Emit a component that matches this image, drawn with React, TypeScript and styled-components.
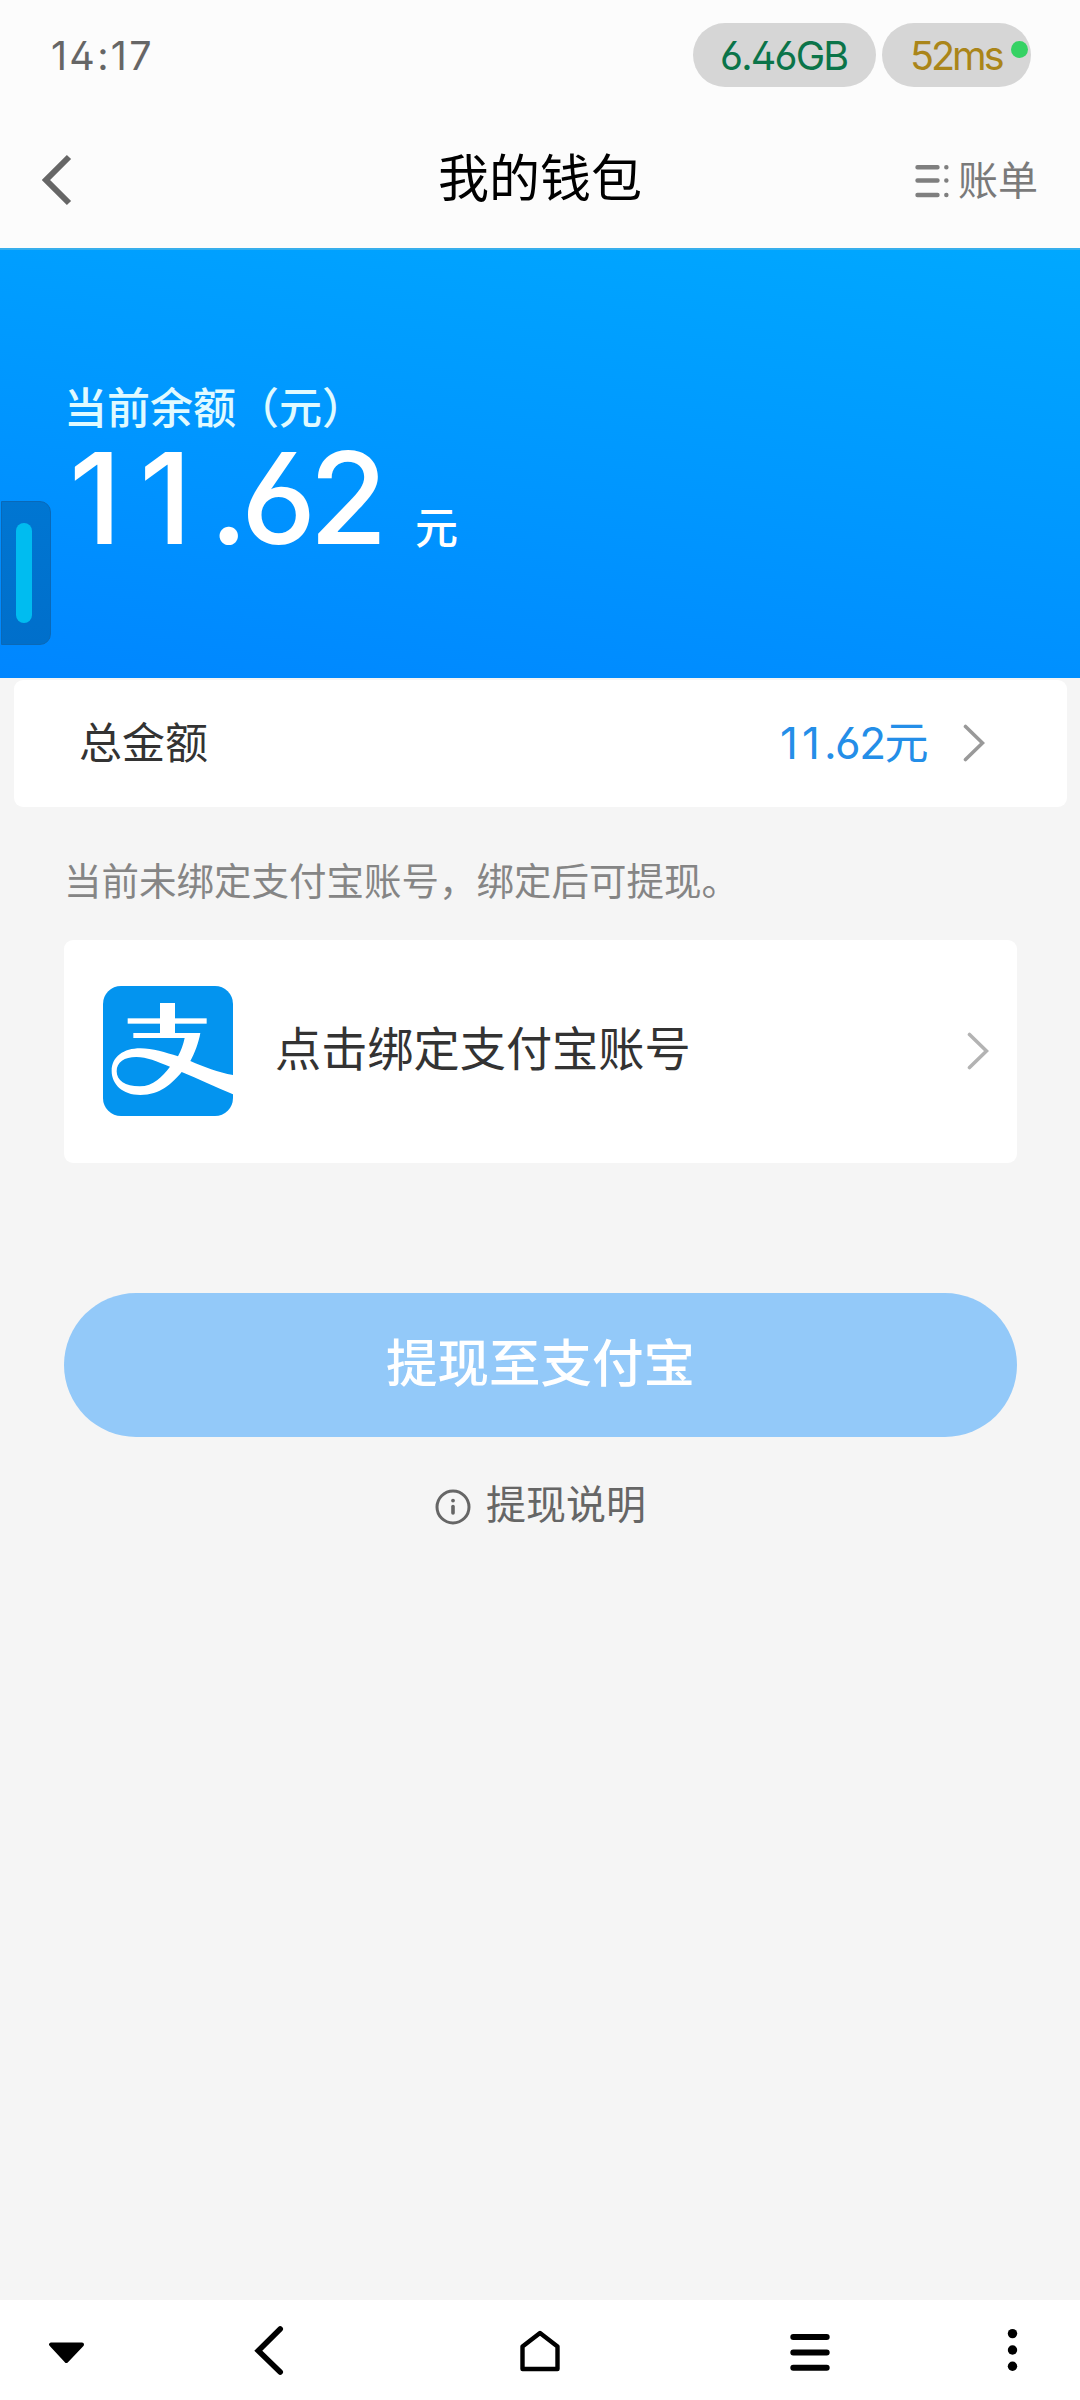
import React from "react";
import styled, { createGlobalStyle } from "styled-components";

const GlobalStyle = createGlobalStyle`
  * { box-sizing: border-box; }
  body {
    margin: 0;
    background: #f5f5f5;
    font-family: Inter, "Noto Sans CJK SC", sans-serif;
    font-feature-settings: "cv02", "cv03";
  }
`;

const Screen = styled.div`
  position: relative;
  display: flex;
  flex-direction: column;
  width: 1080px;
  height: 2400px;
  overflow: hidden;
  background: #f5f5f5;
`;

const StatusBar = styled.div`
  display: flex;
  align-items: center;
  justify-content: space-between;
  height: 110px;
  padding: 0 49px 0 51px;
  background: #fcfcfc;
`;

const Clock = styled.time`
  padding-top: 2px;
  font-size: 39.5px;
  line-height: 48px;
  letter-spacing: 2.3px;
  color: #666;
`;

const Pills = styled.div`
  display: flex;
  gap: 6px;
`;

const Pill = styled.span<{ $width: number; $inset: number; $color: string; $spacing: number }>`
  position: relative;
  width: ${(p) => p.$width}px;
  height: 64px;
  padding-left: ${(p) => p.$inset}px;
  padding-top: 1px;
  border-radius: 32px;
  background: #d6d6d6;
  color: ${(p) => p.$color};
  font-size: 39.5px;
  line-height: 64px;
  letter-spacing: ${(p) => p.$spacing}px;
  white-space: nowrap;
`;

const ActiveDot = styled.i`
  position: absolute;
  top: 18px;
  right: 3px;
  width: 17px;
  height: 17px;
  border-radius: 50%;
  background: #35d264;
`;

const Header = styled.header`
  display: grid;
  grid-template-columns: 1fr auto 1fr;
  align-items: center;
  height: 138px;
  padding: 2px 42px 0;
  background: #fcfcfc;
`;

const Title = styled.h1`
  margin: 0;
  padding-bottom: 3px;
  font-size: 51px;
  line-height: 64px;
  font-weight: 400;
  color: #000;
`;

const Bills = styled.div`
  display: flex;
  align-items: center;
  justify-content: flex-end;
  gap: 9px;
  padding-top: 2px;
  font-size: 40px;
  line-height: 50px;
  color: #7a7a7a;
`;

const Hero = styled.section`
  height: 430px;
  padding: 130px 64px 0;
  border-top: 2px solid #36aeec;
  background: linear-gradient(189deg, #00a8ff 0%, #0099ff 45%, #0086ff 100%);
  color: #fff;
`;

const HeroLabel = styled.div`
  font-size: 43px;
  font-weight: 500;
  line-height: 56px;
  color: #e0faff;
`;

const Amount = styled.div`
  display: flex;
  align-items: baseline;
  margin-top: 10px;
  line-height: 104px;
`;

const AmountValue = styled.span`
  width: 351px;
  padding-left: 5px;
  font-size: 127px;
  font-weight: 500;
  letter-spacing: -7px;
`;

const AmountUnit = styled.span`
  font-size: 43px;
  font-weight: 500;
`;

const WideDigits = styled.span<{ $spacing: number }>`
  letter-spacing: ${(p) => p.$spacing}px;
`;

const TotalCard = styled.section`
  display: flex;
  align-items: center;
  height: 127px;
  margin: 2px 13px 0 14px;
  padding: 0 82px 2px 65px;
  border-radius: 9px;
  background: #fff;
`;

const TotalLabel = styled.span`
  flex: 1;
  font-size: 43px;
  line-height: 56px;
  color: #333;
`;

const TotalValue = styled.span`
  margin-right: 36px;
  font-size: 44px;
  line-height: 56px;
  letter-spacing: -1.5px;
  color: #248ee8;
`;

const Notice = styled.p`
  margin: 49px 64px 32px;
  font-size: 37.5px;
  line-height: 52px;
  color: #858585;
`;

const BindCard = styled.section`
  display: flex;
  align-items: center;
  height: 223px;
  margin: 0 63px 0 64px;
  padding: 0 28px 2px 39px;
  border-radius: 9px;
  background: #fff;
`;

const BindText = styled.span`
  flex: 1;
  margin-left: 42px;
  padding-bottom: 3px;
  font-size: 46.2px;
  line-height: 60px;
  color: #333;
`;

const WithdrawButton = styled.button`
  height: 144px;
  margin: 130px 63px 0 64px;
  padding: 0 0 4px;
  border: 0;
  border-radius: 72px;
  background: #93c9f9;
  color: #fff;
  font: inherit;
  font-size: 51.5px;
  font-weight: 500;
  line-height: 64px;
`;

const Help = styled.div`
  display: flex;
  align-items: center;
  justify-content: center;
  gap: 15px;
  margin: 41px 0 0 1px;
  font-size: 40px;
  line-height: 54px;
  color: #666;
`;

const HelpIcon = styled.svg`
  display: block;
  margin-top: 4px;
`;

const NavBar = styled.nav`
  display: flex;
  align-items: center;
  height: 100px;
  margin-top: auto;
  padding-left: 44px;
  background: #fff;
`;

const NavIcon = styled.svg<{ $after: number }>`
  display: block;
  flex: none;
  margin-right: ${(p) => p.$after}px;
`;

const SideHandle = styled.div`
  position: absolute;
  top: 501px;
  left: 1px;
  display: flex;
  width: 50px;
  height: 144px;
  padding: 21px 0 0 14px;
  border: 1.5px solid #0a69b8;
  border-radius: 0 11px 11px 0;
  background: linear-gradient(#0076d2, #006fcb);
`;

const HandleBar = styled.div`
  width: 16px;
  height: 100px;
  border-radius: 8px;
  background: #00bcf0;
`;

const Chevron = ({ color }: { color: string }) => (
  <svg width="22" height="38" viewBox="0 0 22 38" fill="none">
    <path d="M2.5 2.5 L19.5 19 L2.5 35.5" stroke={color} strokeWidth="3.6" strokeLinecap="round" />
  </svg>
);

const BackIcon = () => (
  <svg width="31" height="52" viewBox="0 0 31 52" fill="none">
    <path d="M27 3 L4 26 L27 49" stroke="#666" strokeWidth="6" />
  </svg>
);

const BillsIcon = () => (
  <svg width="34" height="34" viewBox="0 0 34 34" fill="none" stroke="#7f7f7f" strokeWidth="4.4" strokeLinecap="round">
    <path d="M2.5 3.2H22.5M2.5 16.5H22.5M2.5 31H22.5" />
    <path d="M31.3 3.2h.1M31.3 16.5h.1M31.3 31h.1" />
  </svg>
);

const AlipayLogo = () => (
  <svg width="130" height="130" viewBox="0 0 390 390">
    <rect width="390" height="390" rx="54" fill="#0394ef" />
    <g fill="#fff">
      <rect x="171" y="51" width="45" height="100" />
      <rect x="74" y="97" width="237" height="16" />
      <path d="M91 141H292C287 170 275 202 262 225C302 243 346 259 390 267V325C338 304 285 278 236 258C208 292 172 327 112 327C58 327 26 294 26 255C26 212 62 187 112 187C148 187 188 200 225 211C234 195 241 174 245 156H91Z" />
    </g>
    <path d="M201 242C160 226 132 213 100 213C64 213 41 228 41 256C41 284 66 301 110 301C151 301 178 272 201 242Z" fill="#0394ef" />
  </svg>
);

export default function App() {
  return (
    <>
      <GlobalStyle />
      <Screen>
        <StatusBar>
          <Clock>14:17</Clock>
          <Pills>
            <Pill $width={183} $inset={27} $color="#0b7449" $spacing={-1.8}>6.46GB</Pill>
            <Pill $width={149} $inset={28} $color="#aa8519" $spacing={-3}>
              52ms
              <ActiveDot />
            </Pill>
          </Pills>
        </StatusBar>
        <Header>
          <BackIcon />
          <Title>我的钱包</Title>
          <Bills>
            <BillsIcon />
            账单
          </Bills>
        </Header>
        <Hero>
          <HeroLabel>当前余额（元）</HeroLabel>
          <Amount>
            <AmountValue>
              <WideDigits $spacing={17.5}>11</WideDigits>.62
            </AmountValue>
            <AmountUnit>元</AmountUnit>
          </Amount>
        </Hero>
        <TotalCard>
          <TotalLabel>总金额</TotalLabel>
          <TotalValue>
            <WideDigits $spacing={4}>11</WideDigits>.62元
          </TotalValue>
          <Chevron color="#999" />
        </TotalCard>
        <Notice>当前未绑定支付宝账号，绑定后可提现。</Notice>
        <BindCard>
          <AlipayLogo />
          <BindText>点击绑定支付宝账号</BindText>
          <Chevron color="#b3b3b3" />
        </BindCard>
        <WithdrawButton>提现至支付宝</WithdrawButton>
        <Help>
          <HelpIcon width="36" height="36" viewBox="0 0 36 36" fill="none" stroke="#666">
            <circle cx="18" cy="18" r="16" strokeWidth="3" />
            <path d="M18 17.5V24" strokeWidth="3.6" strokeLinecap="round" />
            <circle cx="18" cy="11.6" r="1.9" fill="#666" stroke="none" />
          </HelpIcon>
          提现说明
        </Help>
        <NavBar>
          <NavIcon $after={164} width="44" height="56" viewBox="44 2322 44 56">
            <path d="M51 2344.5H82L66.3 2361Z" stroke="#000" strokeWidth="4" strokeLinejoin="round" />
          </NavIcon>
          <NavIcon $after={231.5} width="34" height="56" viewBox="252 2322 34 56" fill="none">
            <path d="M280.2 2329L258.3 2350.7L280.2 2372" stroke="#000" strokeWidth="5.6" strokeLinecap="round" />
          </NavIcon>
          <NavIcon $after={226} width="44" height="56" viewBox="517.5 2322 44 56" fill="none">
            <path d="M522 2346.5L539.5 2333L557 2346.5V2369H522Z" stroke="#000" strokeWidth="4.4" strokeLinejoin="round" />
          </NavIcon>
          <NavIcon $after={175.5} width="44" height="56" viewBox="787.5 2322 44 56">
            <path d="M792.8 2337H826.2M792.8 2352.4H826.2M792.8 2367.7H826.2" stroke="#000" strokeWidth="6" strokeLinecap="round" />
          </NavIcon>
          <NavIcon $after={0} width="11" height="56" viewBox="1007 2322 11 56">
            <circle cx="1012.5" cy="2333.6" r="4.7" />
            <circle cx="1012.5" cy="2350" r="4.7" />
            <circle cx="1012.5" cy="2366.3" r="4.7" />
          </NavIcon>
        </NavBar>
        <SideHandle>
          <HandleBar />
        </SideHandle>
      </Screen>
    </>
  );
}
